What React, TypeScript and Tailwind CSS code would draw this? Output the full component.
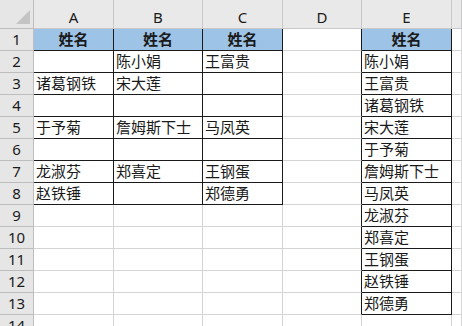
import React from "react";

const cols = ["A", "B", "C", "D", "E", ""];
const widths = "34px 80px 89px 80px 79px 90px 10px";

const data: Record<number, string[]> = {
  1: ["姓名", "姓名", "姓名", "", "姓名"],
  2: ["", "陈小娟", "王富贵", "", "陈小娟"],
  3: ["诸葛钢铁", "宋大莲", "", "", "王富贵"],
  4: ["", "", "", "", "诸葛钢铁"],
  5: ["于予菊", "詹姆斯下士", "马凤英", "", "宋大莲"],
  6: ["", "", "", "", "于予菊"],
  7: ["龙淑芬", "郑喜定", "王钢蛋", "", "詹姆斯下士"],
  8: ["赵铁锤", "", "郑德勇", "", "马凤英"],
  9: ["", "", "", "", "龙淑芬"],
  10: ["", "", "", "", "郑喜定"],
  11: ["", "", "", "", "王钢蛋"],
  12: ["", "", "", "", "赵铁锤"],
  13: ["", "", "", "", "郑德勇"],
  14: ["", "", "", "", ""],
};

export default function App() {
  const rows = Array.from({ length: 14 }, (_, i) => i + 1);
  return (
    <div
      className="w-[462px] h-[326px] overflow-hidden bg-white text-[#1a1a1a]"
      style={{ fontFamily: '"Noto Sans", "Noto Sans CJK SC", sans-serif' }}
    >
      <div className="grid" style={{ gridTemplateColumns: widths }}>
        <div className="relative h-[29px] bg-[#e6e6e6] border-r border-b border-[#bdbdbd]">
          <div className="absolute right-[3px] bottom-[4px] w-0 h-0 border-l-[14px] border-l-transparent border-b-[14px] border-b-[#c4c4c4]" />
        </div>
        {cols.map((c, i) => (
          <div
            key={i}
            className="h-[29px] bg-[#e9e9e9] border-r border-b border-[#c8c8c8] flex items-end justify-center pb-[2px] text-[15px] leading-[18px]"
          >
            {c}
          </div>
        ))}
        {rows.map((r) => {
          const vals = data[r];
          const tblABC = r <= 8;
          const tblE = r <= 13;
          return (
            <React.Fragment key={r}>
              <div className="h-[22px] bg-[#e6e6e6] border-r border-b border-[#bdbdbd] flex items-center justify-center text-[15px] leading-none">
                {r}
              </div>
              {[0, 1, 2, 3, 4, 5].map((ci) => {
                const v = ci < 5 ? vals[ci] : "";
                const inABC = tblABC && ci <= 2;
                const inE = tblE && ci === 4;
                const blackR = inABC || inE || (tblE && ci === 3);
                const blackB = inABC || inE;
                const header = r === 1 && (ci <= 2 || ci === 4);
                return (
                  <div
                    key={ci}
                    className={[
                      "h-[22px] border-r border-b flex items-center text-[15px] leading-none whitespace-nowrap overflow-hidden",
                      blackR ? "border-r-[#1a1a1a]" : "border-r-[#d4d4d4]",
                      blackB ? "border-b-[#1a1a1a]" : "border-b-[#d4d4d4]",
                      header ? "bg-[#9dc3e6] justify-center font-bold" : "pl-[2px]",
                    ].join(" ")}
                  >
                    {v}
                  </div>
                );
              })}
            </React.Fragment>
          );
        })}
      </div>
    </div>
  );
}
